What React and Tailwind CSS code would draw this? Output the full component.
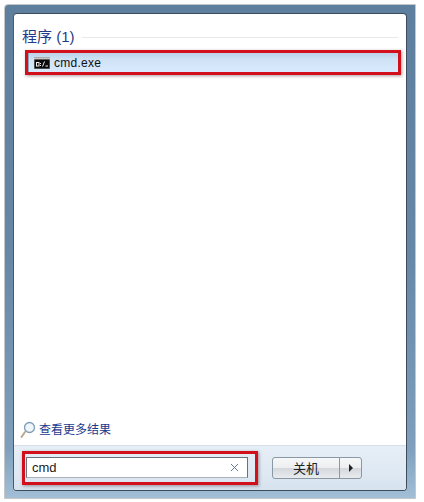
import { X } from "lucide-react";

const CJK = "font-['Liberation_Sans','Noto_Sans_CJK_SC',sans-serif]";

function CmdIcon() {
  return (
    <svg width="16" height="12" viewBox="0 0 16 12" className="shrink-0">
      <rect width="16" height="12" fill="#8d8d8d" />
      <rect y="0.5" width="16" height="2" fill="#c8c8c8" />
      <rect x="0.5" y="2.5" width="15" height="9" fill="#0a0a0a" />
      <rect x="2.5" y="5.5" width="2.5" height="3.5" fill="none" stroke="#eee" strokeWidth="1" />
      <rect x="6" y="6" width="1" height="1" fill="#eee" />
      <rect x="6" y="8" width="1" height="1" fill="#eee" />
      <path d="M8.5 9.5 L10.5 4.5 M11.5 9 H14" stroke="#eee" strokeWidth="1" fill="none" />
    </svg>
  );
}

function SearchIcon() {
  return (
    <svg width="16" height="18" viewBox="0 0 16 18" className="shrink-0">
      <path d="M5 11 L1.5 16" stroke="#b9a98c" strokeWidth="2" strokeLinecap="round" />
      <circle cx="9.5" cy="6.5" r="5" fill="#eef6fb" stroke="#7f9db5" strokeWidth="1.3" />
    </svg>
  );
}

export default function App() {
  return (
    <main className={`min-h-[502px] bg-white pl-[4px] pt-[4px] ${CJK}`}>
      <div className="h-[495px] w-[412px] rounded-tl-[4px] border border-[#c4c6c8] bg-[linear-gradient(180deg,#5f7f9f_0%,#5f7f9f_3%,#6687a6_50%,#7f9fbc_90%,#a2bfd6_100%)] px-[8px] pb-[7px] pt-[8px]">
        <div className="flex h-[478px] flex-col overflow-hidden rounded-[4px] border border-[#3c4c5c] border-l-[#49596a] bg-white">
          <section className="flex flex-1 flex-col pl-[8px] pr-[5px] pt-[13px]">
            <div className="flex items-center">
              <h2 className="text-[15px] leading-[20px] font-normal text-[#1f3a8c]">程序 (1)</h2>
              <div className="ml-[7px] mr-[3px] h-px flex-1 bg-[#e6e8ec]" />
            </div>

            <div className="mt-[3px] ml-[3px] h-[25px] border-[3px] border-[#d2101c] shadow-[1px_1px_3px_rgba(90,60,60,0.5)]">
              <div className="flex h-full items-center gap-[4px] border-l border-[#8fa8c0] bg-[linear-gradient(180deg,#bcd2e8_0%,#cfe2f6_35%,#d9eafd_100%)] pl-[5px]">
                <CmdIcon />
                <span className="text-[12px] leading-none tracking-[0.25px] text-[#111]">cmd.exe</span>
              </div>
            </div>

            <div className="flex-1" />

            <a className="mb-[6px] -ml-[2px] flex items-center gap-[3px]">
              <SearchIcon />
              <span className="text-[12px] leading-[18px] text-[#1a3a8e]">查看更多结果</span>
            </a>
          </section>

          <footer className="flex h-[45px] items-center border-t border-[#d6e0ea] bg-[linear-gradient(180deg,#e6eef6_0%,#dfe9f3_60%,#d6e2ee_100%)] pl-[8px]">
            <div className="h-[34px] w-[236px] border-[3px] border-[#d2101c] pt-[3px] pr-[7px] pb-[4px] pl-[1px] shadow-[1px_1px_3px_rgba(90,60,60,0.5)]">
              <div className="flex h-full items-center justify-between border border-[#66727e] border-b-[#a9b2ba] bg-white pl-[5px] pr-[6px]">
                <span className="text-[13px] leading-none text-[#222]">cmd</span>
                <X size={13} strokeWidth={1.8} className="text-[#5c7a96]" />
              </div>
            </div>

            <div className="ml-[14px] flex h-[22px] w-[90px] overflow-hidden rounded-[3px] border border-[#8a98a6] bg-[linear-gradient(180deg,#f6f7f8_0%,#eceef0_48%,#d4d8dc_52%,#e9ecef_100%)]">
              <button className="flex flex-1 items-center justify-center border-r border-[#8a98a6] text-[13px] leading-none text-[#222]">
                关机
              </button>
              <button className="flex w-[21px] items-center justify-center">
                <span className="h-0 w-0 border-y-[4px] border-l-[4px] border-y-transparent border-l-[#222]" />
              </button>
            </div>
          </footer>
        </div>
      </div>
    </main>
  );
}
